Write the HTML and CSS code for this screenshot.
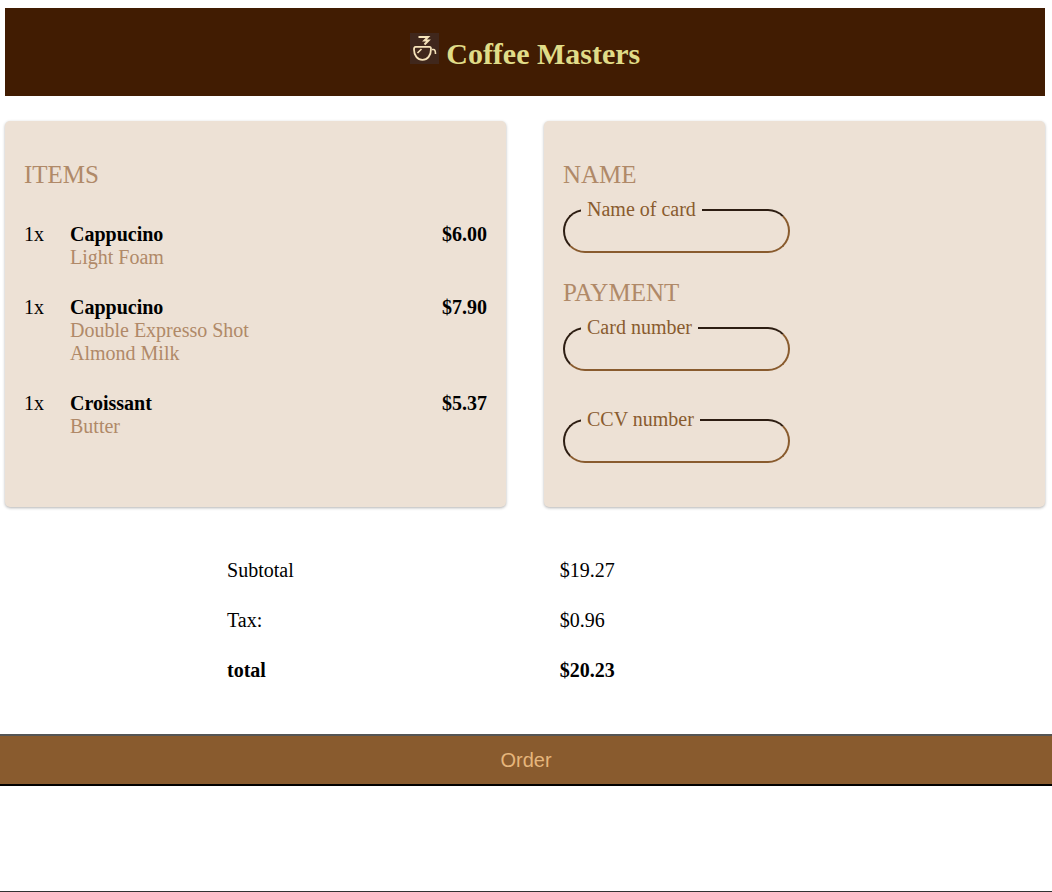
FILE: index.html
```html
<!DOCTYPE html>
<html lang="en">
<head>
<meta charset="utf-8">
<meta name="viewport" content="width=device-width, initial-scale=1">
<title>Coffee Masters</title>
<link rel="stylesheet" href="styles.css">
</head>
<body>
<form class="page">
  <div class="content">
    <header class="banner">
      <h1 class="banner-title">
        <svg class="logo" viewBox="0 0 29 31" aria-hidden="true">
          <rect width="29" height="31" fill="#40271c"/>
          <g fill="none" stroke="#f6e3ba" stroke-width="1.8">
            <path d="M8.500 4H18L14.500 7.500H18.500L14.500 11.500" stroke-width="2"/>
            <path d="M5.500 13.800H19.500Q21 13.800 21 16C21 22.500 17.500 26.800 12.500 26.800S4 22.500 4 16.500Q4 13.800 5.500 13.800Z"/>
            <path d="M7.500 20L11.500 16M22 16.500H23.500Q25.500 16.500 25.500 21" stroke-width="1.600"/>
          </g>
        </svg>
        Coffee Masters
      </h1>
    </header>

    <main class="cards">
      <section class="card">
        <h2 class="heading">ITEMS</h2>
        <ul class="items">
          <li class="item">
            <span>1x</span>
            <div><strong>Cappucino</strong><div class="extra">Light Foam</div></div>
            <strong>$6.00</strong>
          </li>
          <li class="item">
            <span>1x</span>
            <div><strong>Cappucino</strong><div class="extra">Double Expresso Shot</div><div class="extra">Almond Milk</div></div>
            <strong>$7.90</strong>
          </li>
          <li class="item">
            <span>1x</span>
            <div><strong>Croissant</strong><div class="extra">Butter</div></div>
            <strong>$5.37</strong>
          </li>
        </ul>
      </section>

      <section class="card">
        <h2 class="heading">NAME</h2>
        <fieldset class="field">
          <legend class="legend"><label for="card-name">Name of card</label></legend>
          <input class="input" id="card-name" type="text">
        </fieldset>
        <h2 class="heading heading-next">PAYMENT</h2>
        <fieldset class="field">
          <legend class="legend"><label for="card-number">Card number</label></legend>
          <input class="input" id="card-number" type="text">
        </fieldset>
        <fieldset class="field field-next">
          <legend class="legend"><label for="ccv">CCV number</label></legend>
          <input class="input" id="ccv" type="text">
        </fieldset>
      </section>
    </main>

    <table class="totals">
      <tbody>
        <tr><td>Subtotal</td><td>$19.27</td></tr>
        <tr><td>Tax:</td><td>$0.96</td></tr>
        <tr class="total"><td>total</td><td>$20.23</td></tr>
      </tbody>
    </table>
  </div>
  <button class="order" type="submit">Order</button>
  <footer class="footer"></footer>
</form>
</body>
</html>
```

FILE: styles.css
```css
* { box-sizing: border-box; }

body {
  margin: 0;
  background: #fff;
  color: #000;
  font: 20px/23px "Liberation Serif", "Times New Roman", serif;
}

.page {
  display: flex;
  flex-direction: column;
  min-height: 100vh;
}

.content { padding: 8px 7px 0 5px; }

.banner {
  padding: 25px 16px;
  background: #411c02;
  text-align: center;
}

.banner-title {
  margin: 0;
  color: #e0dc88;
  font-size: 30px;
  line-height: 34px;
}

.logo {
  width: 29px;
  height: 31px;
  vertical-align: baseline;
}

.cards {
  display: grid;
  grid-template-columns: 1fr 1fr;
  gap: 38px;
  margin-top: 25px;
}

.card {
  padding: 39px 19px 44px;
  border-radius: 5px;
  background: #ede1d5;
  box-shadow: 0 1px 3px rgba(0, 0, 0, 0.3);
}

.heading {
  margin: 0 0 9px;
  color: #b08968;
  font-size: 25px;
  font-weight: normal;
  line-height: 29px;
}

.heading-next { margin-top: 25px; }

.items {
  display: grid;
  gap: 27px;
  margin: 34px 0 0;
  padding: 0;
  list-style: none;
}

.item {
  display: grid;
  grid-template-columns: 46px 1fr auto;
}

.extra { color: #b08968; }

.field {
  width: 227px;
  max-width: 100%;
  margin: 0;
  padding: 0 16px 9px;
  border: 2px solid;
  border-color: #2d1d12 #895b2e #895b2e #2d1d12;
  border-radius: 22px;
}

.field-next { margin-top: 37px; }

.legend {
  padding: 0 6px;
  color: #895b2e;
}

.input {
  display: block;
  width: 100%;
  height: 21px;
  padding: 0;
  border: 0;
  outline: 0;
  background: transparent;
  font: inherit;
}

.totals {
  width: 64%;
  margin: 38px 0 0 21.35%;
  border-collapse: collapse;
  table-layout: fixed;
}

.totals td {
  height: 50px;
  padding: 0;
}

.total { font-weight: bold; }

.order {
  width: 100%;
  height: 52px;
  margin-top: 39px;
  padding: 0;
  border: solid #555;
  border-width: 2px 0;
  border-bottom-color: #000;
  background: #895b2e;
  color: #e6b67c;
  font: 20px "Liberation Sans", Arial, sans-serif;
}

.footer {
  margin-top: auto;
  border-top: 1px solid #333;
}
```
